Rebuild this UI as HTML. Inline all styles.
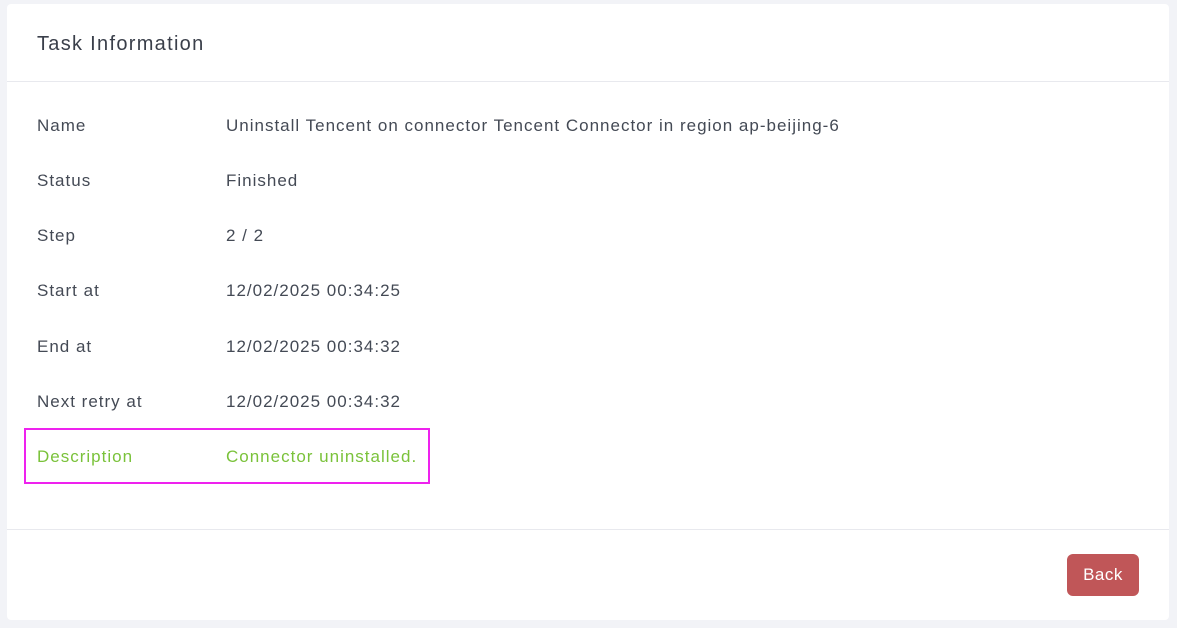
<!DOCTYPE html>
<html><head><meta charset="utf-8"><style>
body{margin:0;background:#f2f3f7;font-family:"Liberation Sans",sans-serif;width:1177px;height:628px;overflow:hidden;position:relative}
.card{position:absolute;left:7px;top:4px;width:1162px;height:616px;background:#fff;border-radius:4px}
.title{position:absolute;left:30px;top:29px;font-size:20px;color:#3a3f4a;letter-spacing:1.3px}
.hr{position:absolute;left:0;right:0;height:1px;background:#e8e9ee}
.row{position:absolute;left:30px;font-size:17px;color:#444a55;letter-spacing:1px;height:20px;line-height:20px}
.row .l{position:absolute;left:0;white-space:nowrap}
.row .v{position:absolute;left:189px;white-space:nowrap}
.g{color:#7ac23a}
.box{position:absolute;left:17px;top:424px;width:406px;height:56px;border:2px solid #ee22ee;box-sizing:border-box}
.btn{position:absolute;left:1060px;top:550px;width:72px;height:42px;background:#c05658;border-radius:6px;color:#fff;font-size:17px;line-height:42px;text-align:center;letter-spacing:0.5px}
</style></head><body>
<div class="card">
<div class="title">Task Information</div>
<div class="hr" style="top:77px"></div>
<div class="row" style="top:112px"><span class="l">Name</span><span class="v">Uninstall Tencent on connector Tencent Connector in region ap-beijing-6</span></div>
<div class="row" style="top:167px"><span class="l">Status</span><span class="v">Finished</span></div>
<div class="row" style="top:222px"><span class="l">Step</span><span class="v">2 / 2</span></div>
<div class="row" style="top:277px"><span class="l">Start at</span><span class="v">12/02/2025 00:34:25</span></div>
<div class="row" style="top:333px"><span class="l">End at</span><span class="v">12/02/2025 00:34:32</span></div>
<div class="row" style="top:388px"><span class="l">Next retry at</span><span class="v">12/02/2025 00:34:32</span></div>
<div class="row g" style="top:443px"><span class="l">Description</span><span class="v">Connector uninstalled.</span></div>
<div class="box"></div>
<div class="hr" style="top:525px"></div>
<div class="btn">Back</div>
</div>
</body></html>
